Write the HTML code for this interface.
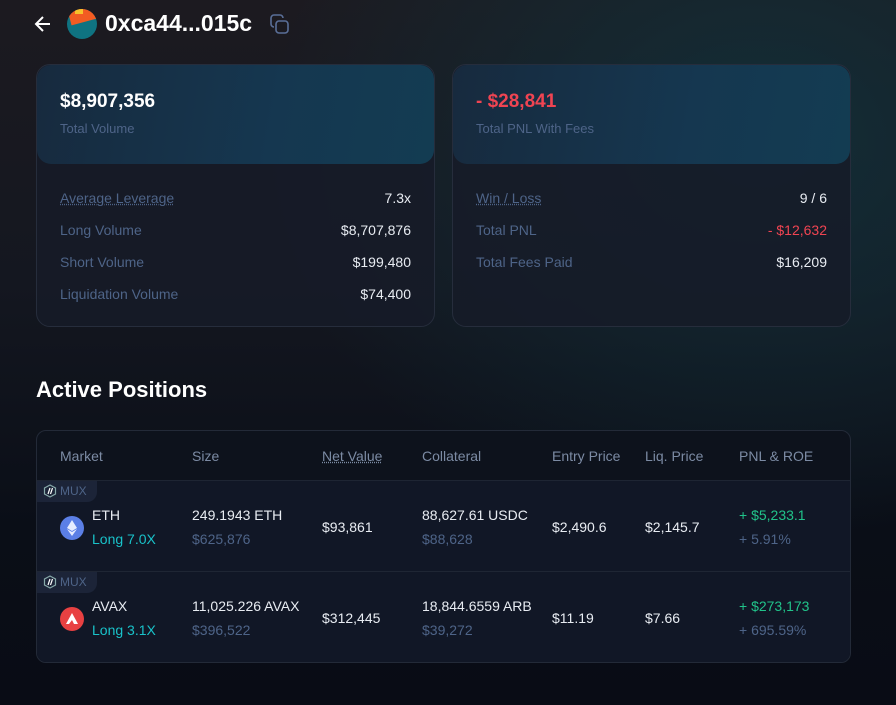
<!DOCTYPE html>
<html><head><style>
*{margin:0;padding:0;box-sizing:border-box}
body{width:896px;height:705px;overflow:hidden;font-family:"Liberation Sans",sans-serif;color:#e8ecf2;
background:radial-gradient(ellipse 500px 400px at 760px 140px,rgba(17,51,61,.8) 0%,rgba(17,51,61,0) 100%),linear-gradient(180deg,#1c1a20 0%,#141720 40%,#0a0e17 75%,#090c15 100%);position:relative}
.a{position:absolute}
.card{position:absolute;top:64px;width:399px;height:263px;border:1px solid #262d3c;border-radius:14px;background:rgba(22,27,40,.85);overflow:hidden}
.head{height:99px;background:linear-gradient(100deg,#172a3e 0%,#153750 60%,#133c52 100%);border-radius:14px;padding:26px 23px}
.big{font-size:19px;font-weight:bold;color:#fff}
.sub{font-size:13px;color:#4e6488;margin-top:8px}
.row{display:flex;justify-content:space-between;padding:0 23px 0 23px;font-size:14px;height:32px;align-items:center}
.row span:first-child{color:#4e6488}
.tbl{position:absolute;left:36px;top:430px;width:815px;height:233px;border:1px solid #232a38;border-radius:10px;background:#0d121c;overflow:hidden}
.th{height:50px;position:relative;font-size:14px;color:#7c8ba4;border-bottom:1px solid #1e2533}
.tr{height:91px;position:relative;background:#111726;border-bottom:1px solid #1f2634;font-size:14px}
.c{position:absolute}
.mux{position:absolute;left:0;top:0;width:60px;height:21px;background:#1c2438;border-radius:0 0 10px 0;color:#4e6488;font-size:12px;padding:3px 0 0 6px;display:flex;gap:3px}
.g{color:#4e6488}
.ico{position:absolute;left:23px;top:35px;width:24px;height:24px;border-radius:50%}
</style></head><body>
<svg class="a" style="left:33px;top:14px" width="20" height="20" viewBox="0 0 20 20"><path d="M17 10H4M10 3L3 10l7 7" stroke="#fff" stroke-width="2" fill="none"/></svg>
<div class="a" style="left:67px;top:9px;width:30px;height:30px;border-radius:50%;overflow:hidden;background:#0f7381">
<div class="a" style="left:2px;top:-3px;width:28px;height:16px;background:#f25c22;transform:rotate(-15deg)"></div>
<div class="a" style="left:8px;top:0;width:8px;height:5px;background:#f8c22a"></div>
</div>
<div class="a" style="left:105px;top:10px;font-size:23px;font-weight:bold;color:#fff">0xca44...015c</div>
<svg class="a" style="left:269px;top:13px" width="22" height="22" viewBox="0 0 22 22" fill="none" stroke="#5a6f98" stroke-width="1.6"><rect x="7" y="8" width="12" height="12" rx="3"/><path d="M5 14a3 3 0 0 1-3-3V5a3 3 0 0 1 3-3h6a3 3 0 0 1 3 3"/></svg>

<div class="card" style="left:36px">
<div class="head"><div class="big">$8,907,356</div><div class="sub">Total Volume</div></div>
<div style="padding-top:18px">
<div class="row"><span style="text-decoration:underline dotted">Average Leverage</span><span>7.3x</span></div>
<div class="row"><span>Long Volume</span><span>$8,707,876</span></div>
<div class="row"><span>Short Volume</span><span>$199,480</span></div>
<div class="row"><span>Liquidation Volume</span><span>$74,400</span></div>
</div></div>
<div class="card" style="left:452px">
<div class="head"><div class="big" style="color:#f04452">- $28,841</div><div class="sub">Total PNL With Fees</div></div>
<div style="padding-top:18px">
<div class="row"><span style="text-decoration:underline dotted">Win / Loss</span><span>9 / 6</span></div>
<div class="row"><span>Total PNL</span><span style="color:#f04452">- $12,632</span></div>
<div class="row"><span>Total Fees Paid</span><span>$16,209</span></div>
</div></div>

<div class="a" style="left:36px;top:377px;font-size:22px;font-weight:bold;color:#fff">Active Positions</div>

<div class="tbl">
<div class="th">
<span class="c" style="left:23px;top:17px">Market</span><span class="c" style="left:155px;top:17px">Size</span>
<span class="c" style="left:285px;top:17px;text-decoration:underline dotted">Net Value</span><span class="c" style="left:385px;top:17px">Collateral</span>
<span class="c" style="left:515px;top:17px">Entry Price</span><span class="c" style="left:608px;top:17px">Liq. Price</span>
<span class="c" style="left:702px;top:17px">PNL &amp; ROE</span></div>
<div class="tr"><div class="mux"><svg width="14" height="14" viewBox="0 0 14 14"><path d="M7 1l5.5 3v6L7 13 1.5 10V4z" fill="none" stroke="#8aa" stroke-width="1.2"/><path d="M5 10l2-6M7.5 10l2-6" stroke="#fff" stroke-width="1.2"/></svg>MUX</div>
<div class="ico" style="background:#5b7fe6"><svg width="24" height="24" viewBox="0 0 24 24"><path d="M12 4l-5 8 5 3 5-3zM7 13l5 7 5-7-5 3z" fill="#e6ecff"/></svg></div>
<span class="c" style="left:55px;top:26px">ETH</span><span class="c" style="left:55px;top:50px;color:#19c2c9">Long 7.0X</span>
<span class="c" style="left:155px;top:26px">249.1943 ETH</span><span class="c g" style="left:155px;top:50px">$625,876</span>
<span class="c" style="left:285px;top:38px">$93,861</span>
<span class="c" style="left:385px;top:26px">88,627.61 USDC</span><span class="c g" style="left:385px;top:50px">$88,628</span>
<span class="c" style="left:515px;top:38px">$2,490.6</span><span class="c" style="left:608px;top:38px">$2,145.7</span>
<span class="c" style="left:702px;top:26px;color:#21c38a">+ $5,233.1</span><span class="c g" style="left:702px;top:50px">+ 5.91%</span></div>
<div class="tr"><div class="mux"><svg width="14" height="14" viewBox="0 0 14 14"><path d="M7 1l5.5 3v6L7 13 1.5 10V4z" fill="none" stroke="#8aa" stroke-width="1.2"/><path d="M5 10l2-6M7.5 10l2-6" stroke="#fff" stroke-width="1.2"/></svg>MUX</div>
<div class="ico" style="background:#e84142"><svg width="24" height="24" viewBox="0 0 24 24"><path d="M12 6l6 11h-4l-2-4-3 4H6z" fill="#fff"/></svg></div>
<span class="c" style="left:55px;top:26px">AVAX</span><span class="c" style="left:55px;top:50px;color:#19c2c9">Long 3.1X</span>
<span class="c" style="left:155px;top:26px">11,025.226 AVAX</span><span class="c g" style="left:155px;top:50px">$396,522</span>
<span class="c" style="left:285px;top:38px">$312,445</span>
<span class="c" style="left:385px;top:26px">18,844.6559 ARB</span><span class="c g" style="left:385px;top:50px">$39,272</span>
<span class="c" style="left:515px;top:38px">$11.19</span><span class="c" style="left:608px;top:38px">$7.66</span>
<span class="c" style="left:702px;top:26px;color:#21c38a">+ $273,173</span><span class="c g" style="left:702px;top:50px">+ 695.59%</span></div>
</div>
</body></html>
